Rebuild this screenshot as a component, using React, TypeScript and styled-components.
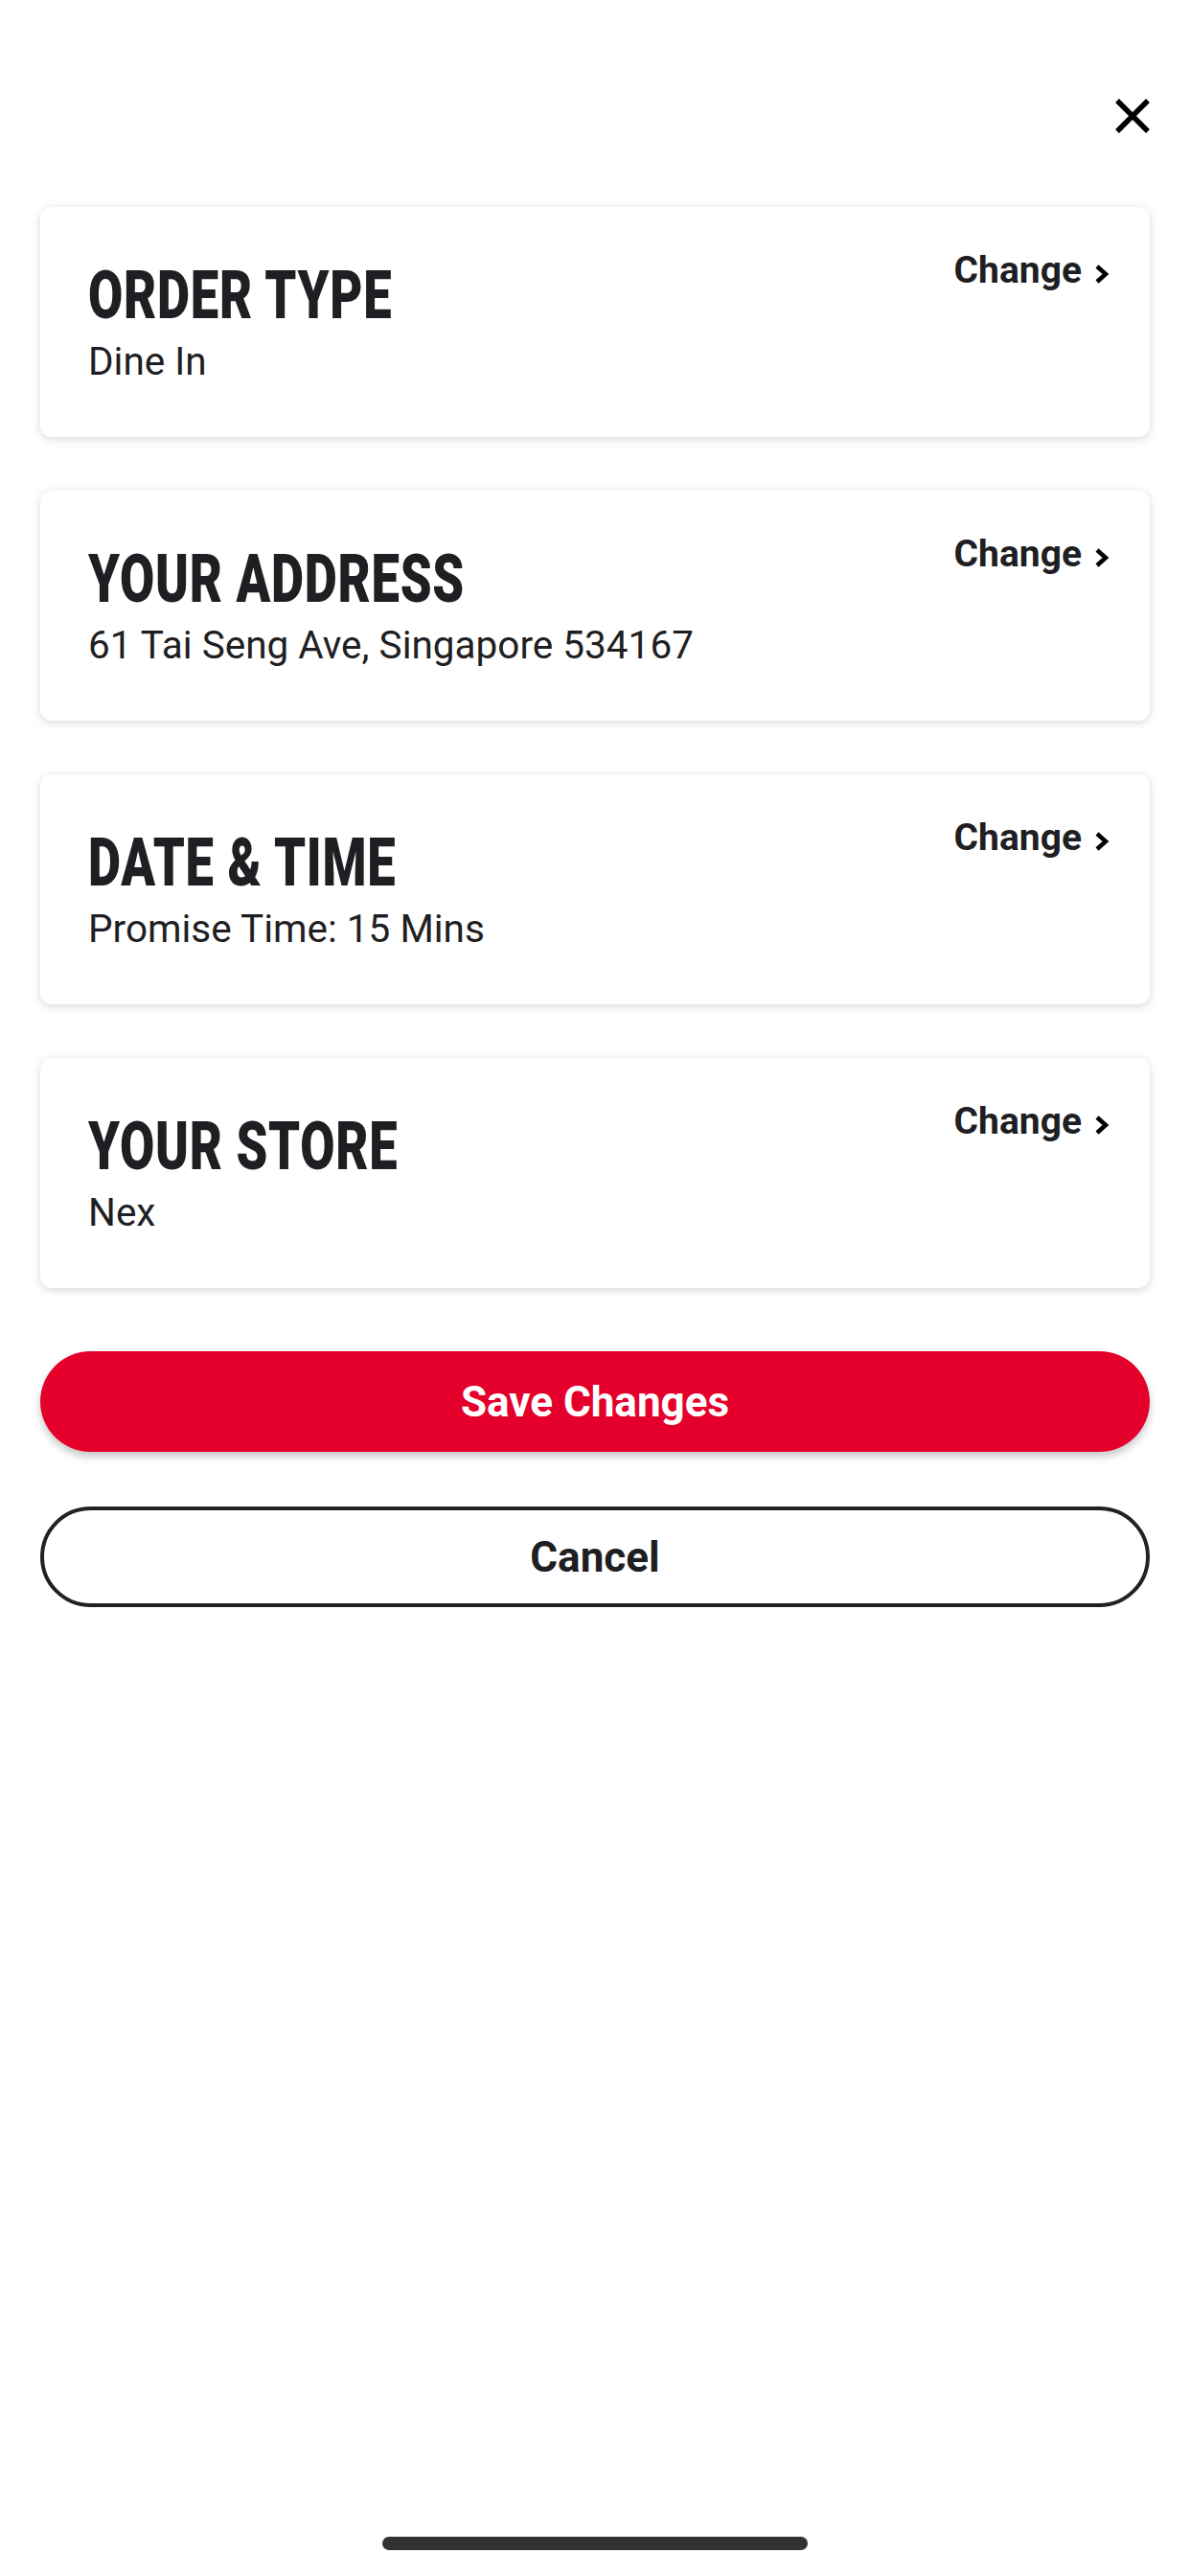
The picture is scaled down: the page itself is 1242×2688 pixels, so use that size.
import React from "react";
import styled, { createGlobalStyle } from "styled-components";

const GlobalStyle = createGlobalStyle`
  html, body {
    margin: 0;
    padding: 0;
    background: #ffffff;
  }
  body {
    font-family: Roboto, "Liberation Sans", Arial, sans-serif;
    color: #1f1f23;
  }
  * { box-sizing: border-box; }
`;

const Page = styled.div`
  min-height: 100vh;
  width: 1242px;
  padding: 0 42px;
  display: flex;
  flex-direction: column;
  background: #fff;
`;

const Header = styled.header`
  height: 216px;
  padding-top: 103px;
  display: flex;
  justify-content: flex-end;
  align-items: flex-start;
`;

const CloseButton = styled.button`
  width: 36px;
  height: 36px;
  padding: 0;
  border: none;
  background: transparent;
  display: block;
  cursor: pointer;
`;

const CardList = styled.div`
  display: flex;
  flex-direction: column;
  gap: 56px;
`;

const Card = styled.section`
  height: 240px;
  border-radius: 12px;
  background: #fff;
  box-shadow: 0 2px 10px rgba(0, 0, 0, 0.16);
  padding: 47px 42px 0 50px;
  display: flex;
  justify-content: space-between;
  align-items: flex-start;
`;

const Info = styled.div`
  margin-top: 9px;
  display: flex;
  flex-direction: column;
  min-width: 0;
`;

const Title = styled.h2`
  margin: 0;
  font-family: Roboto, "Liberation Sans", sans-serif;
  font-weight: 900;
  font-size: 71px;
  line-height: 1;
  height: 71px;
  color: #1f1f23;
  letter-spacing: 1px;
  white-space: nowrap;
  transform: scaleX(0.74);
  transform-origin: left center;
`;

const Value = styled.p`
  margin: 14px 0 0;
  font-family: Roboto, "Liberation Sans", sans-serif;
  font-weight: 400;
  font-size: 40.5px;
  line-height: 1;
  color: #1f1f23;
  white-space: nowrap;
`;

const ChangeLink = styled.button`
  border: none;
  background: transparent;
  padding: 0;
  display: flex;
  align-items: center;
  gap: 13px;
  font-family: Roboto, "Liberation Sans", sans-serif;
  font-weight: 700;
  font-size: 39px;
  line-height: 1;
  color: #1f1f23;
  cursor: pointer;
`;

const Chevron = styled.svg`
  width: 16px;
  height: 22px;
  margin-top: 6px;
`;

const Actions = styled.div`
  margin-top: 66px;
  display: flex;
  flex-direction: column;
  gap: 57px;
`;

const PillButton = styled.button<{ $primary?: boolean }>`
  height: 105px;
  width: 100%;
  border-radius: 53px;
  font-family: Roboto, "Liberation Sans", sans-serif;
  font-weight: 700;
  font-size: 44px;
  line-height: 1;
  cursor: pointer;
  background: ${(p) => (p.$primary ? "#e4002b" : "#ffffff")};
  color: ${(p) => (p.$primary ? "#ffffff" : "#1f1f23")};
  border: ${(p) => (p.$primary ? "none" : "4px solid #222222")};
  box-shadow: ${(p) => (p.$primary ? "0 5px 9px rgba(0, 0, 0, 0.22)" : "none")};
`;

const Spacer = styled.div`
  flex: 1;
`;

const HomeIndicator = styled.div`
  align-self: center;
  width: 444px;
  height: 14px;
  border-radius: 7px;
  background: #333333;
  margin-bottom: 27px;
`;

const sections = [
  { title: "ORDER TYPE", value: "Dine In" },
  { title: "YOUR ADDRESS", value: "61 Tai Seng Ave, Singapore 534167" },
  { title: "DATE & TIME", value: "Promise Time: 15 Mins" },
  { title: "YOUR STORE", value: "Nex" },
];

export default function App() {
  return (
    <>
      <GlobalStyle />
      <Page>
        <Header>
          <CloseButton aria-label="Close">
            <svg width="36" height="36" viewBox="0 0 36 36">
              <path
                d="M2 2 L34 34 M34 2 L2 34"
                stroke="#000"
                strokeWidth="5.5"
                fill="none"
              />
            </svg>
          </CloseButton>
        </Header>
        <CardList>
          {sections.map((s) => (
            <Card key={s.title}>
              <Info>
                <Title>{s.title}</Title>
                <Value>{s.value}</Value>
              </Info>
              <ChangeLink>
                Change
                <Chevron viewBox="0 0 16 22">
                  <path
                    d="M3 3 L12 11 L3 19"
                    stroke="#000"
                    strokeWidth="4.5"
                    fill="none"
                    strokeLinejoin="miter"
                  />
                </Chevron>
              </ChangeLink>
            </Card>
          ))}
        </CardList>
        <Actions>
          <PillButton $primary>Save Changes</PillButton>
          <PillButton>Cancel</PillButton>
        </Actions>
        <Spacer />
        <HomeIndicator />
      </Page>
    </>
  );
}
